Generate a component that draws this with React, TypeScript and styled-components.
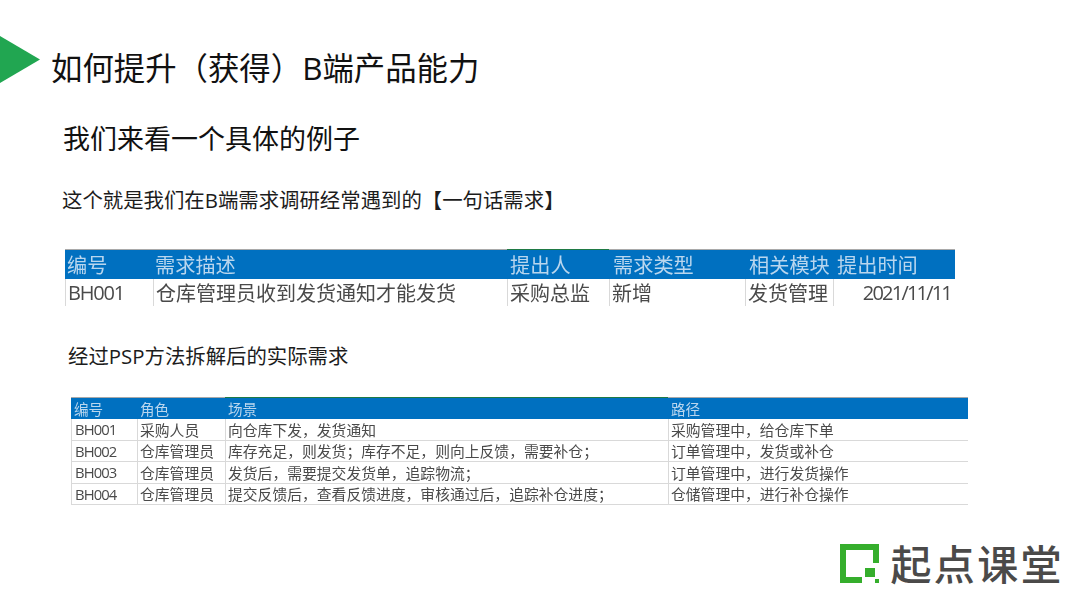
import styled, { createGlobalStyle } from "styled-components";

const FONT = `"Open Sans", "Noto Sans CJK SC", sans-serif`;

const GlobalStyle = createGlobalStyle`
  html, body {
    margin: 0;
    padding: 0;
    background: #ffffff;
  }
  body {
    font-family: ${FONT};
    color: #1a1a1a;
  }
`;

// slide

const Slide = styled.main`
  width: 1080px;
  height: 602px;
  overflow: hidden;
  display: flex;
  flex-direction: column;
`;

const TitleRow = styled.header`
  display: flex;
  align-items: flex-start;
  gap: 11px;
  padding-top: 36px;
  height: 84px;
`;

const Arrow = styled.div`
  width: 40px;
  height: 47px;
  background: #21a651;
  clip-path: polygon(0 0, 100% 50%, 0 100%);
`;

const Title = styled.h1`
  margin: 9px 0 0;
  font-size: 31.4px;
  line-height: 46px;
  font-weight: 400;
  color: #111111;
`;

const SubTitle = styled.h2`
  margin: 0 0 0 63px;
  font-size: 27px;
  line-height: 38px;
  font-weight: 400;
  color: #111111;
`;

const Note = styled.p<{ $left: number; $top: number }>`
  margin: ${(props) => props.$top}px 0 0 ${(props) => props.$left}px;
  font-size: 20.4px;
  line-height: 28px;
  color: #1c1c1c;
`;

// tables

const Table = styled.section<{ $left: number; $width: number; $top: number }>`
  width: ${(props) => props.$width}px;
  margin: ${(props) => props.$top}px 0 0 ${(props) => props.$left}px;
  filter: blur(0.3px);
`;

const TopEdge = styled.div<{ $cols: string }>`
  display: grid;
  grid-template-columns: ${(props) => props.$cols};
  height: 1px;
  background: #a9a9a9;
`;

const GreenEdge = styled.div<{ $col: number }>`
  grid-column: ${(props) => props.$col};
  background: #1f7a45;
`;

const Row = styled.div<{ $cols: string; $height: number; $header?: boolean; $lined?: boolean }>`
  display: grid;
  grid-template-columns: ${(props) => props.$cols};
  height: ${(props) => props.$height}px;
  background: ${(props) => (props.$header ? "#0070c0" : "#ffffff")};
  border-bottom: ${(props) => (props.$lined ? "1px solid #d9d9d9" : "none")};
  box-sizing: border-box;
`;

const Cell = styled.div<{
  $size: number;
  $pad: number;
  $header?: boolean;
  $right?: boolean;
  $tight?: number;
}>`
  display: flex;
  align-items: center;
  justify-content: ${(props) => (props.$right ? "flex-end" : "flex-start")};
  box-sizing: border-box;
  padding: 0 ${(props) => (props.$right ? 4 : 0)}px ${(props) => (props.$header ? 1 : 0)}px
    ${(props) => props.$pad}px;
  font-size: ${(props) => props.$size}px;
  letter-spacing: ${(props) => props.$tight ?? 0}em;
  white-space: nowrap;
  overflow: hidden;
  color: ${(props) => (props.$header ? "#b9d6ee" : "#4a4a4a")};
  border-left: ${(props) => (props.$header ? "none" : "1px solid #d9d9d9")};
`;

// logo

const Footer = styled.footer`
  margin-top: auto;
  display: flex;
  align-items: center;
  justify-content: flex-end;
  gap: 10px;
  padding: 0 16px 17px 0;
`;

const LogoText = styled.span`
  font-size: 41px;
  line-height: 42px;
  font-weight: 500;
  letter-spacing: 2.4px;
  color: #4b4a49;
`;

const bigCols = "88px 354px 102px 136px 88px 122px";
const smallCols = "66px 88px 443px 300px";

const bigHead = ["编号", "需求描述", "提出人", "需求类型", "相关模块", "提出时间"];
const bigHeadPad = [2, 2, 3, 4, 4, 4];
const bigRow = ["BH001", "仓库管理员收到发货通知才能发货", "采购总监", "新增", "发货管理", "2021/11/11"];
const bigRowTight = [-0.06, 0, 0, 0, 0, -0.09];

const smallHead = ["编号", "角色", "场景", "路径"];
const smallRows = [
  ["BH001", "采购人员", "向仓库下发，发货通知", "采购管理中，给仓库下单"],
  ["BH002", "仓库管理员", "库存充足，则发货；库存不足，则向上反馈，需要补仓；", "订单管理中，发货或补仓"],
  ["BH003", "仓库管理员", "发货后，需要提交发货单，追踪物流；", "订单管理中，进行发货操作"],
  ["BH004", "仓库管理员", "提交反馈后，查看反馈进度，审核通过后，追踪补仓进度；", "仓储管理中，进行补仓操作"],
];

function App() {
  return (
    <Slide>
      <GlobalStyle />
      <TitleRow>
        <Arrow />
        <Title>如何提升（获得）B端产品能力</Title>
      </TitleRow>
      <SubTitle>我们来看一个具体的例子</SubTitle>
      <Note $left={62} $top={28}>
        这个就是我们在B端需求调研经常遇到的【一句话需求】
      </Note>

      <Table $left={65} $width={890} $top={35}>
        <TopEdge $cols={bigCols}>
          <GreenEdge $col={3} />
        </TopEdge>
        <Row $cols={bigCols} $height={29} $header>
          {bigHead.map((text, i) => (
            <Cell key={text} $size={20.2} $pad={bigHeadPad[i]} $header>
              {text}
            </Cell>
          ))}
        </Row>
        <Row $cols={bigCols} $height={27}>
          {bigRow.map((text, i) => (
            <Cell key={text} $size={20} $pad={2} $right={i === 5} $tight={bigRowTight[i]}>
              {text}
            </Cell>
          ))}
        </Row>
      </Table>

      <Note $left={68} $top={36}>
        经过PSP方法拆解后的实际需求
      </Note>

      <Table $left={71} $width={897} $top={27}>
        <TopEdge $cols={smallCols}>
          <GreenEdge $col={3} />
        </TopEdge>
        <Row $cols={smallCols} $height={21} $header>
          {smallHead.map((text) => (
            <Cell key={text} $size={14.6} $pad={3} $header>
              {text}
            </Cell>
          ))}
        </Row>
        {smallRows.map((row) => (
          <Row key={row[0]} $cols={smallCols} $height={21.5} $lined>
            {row.map((text, i) => (
              <Cell key={text} $size={14.8} $pad={i === 0 ? 3 : 2} $tight={i === 0 ? -0.06 : 0}>
                {text}
              </Cell>
            ))}
          </Row>
        ))}
      </Table>

      <Footer>
        <svg width="40" height="40" viewBox="0 0 40 40" aria-hidden="true">
          <path d="M0 0H39V19H33V6H6V33H22V39H0Z" fill="#35ae2c" />
          <rect x="25" y="24" width="10" height="9" fill="#35ae2c" />
          <rect x="35" y="35" width="4" height="4" fill="#35ae2c" />
        </svg>
        <LogoText>起点课堂</LogoText>
      </Footer>
    </Slide>
  );
}

export default App;
